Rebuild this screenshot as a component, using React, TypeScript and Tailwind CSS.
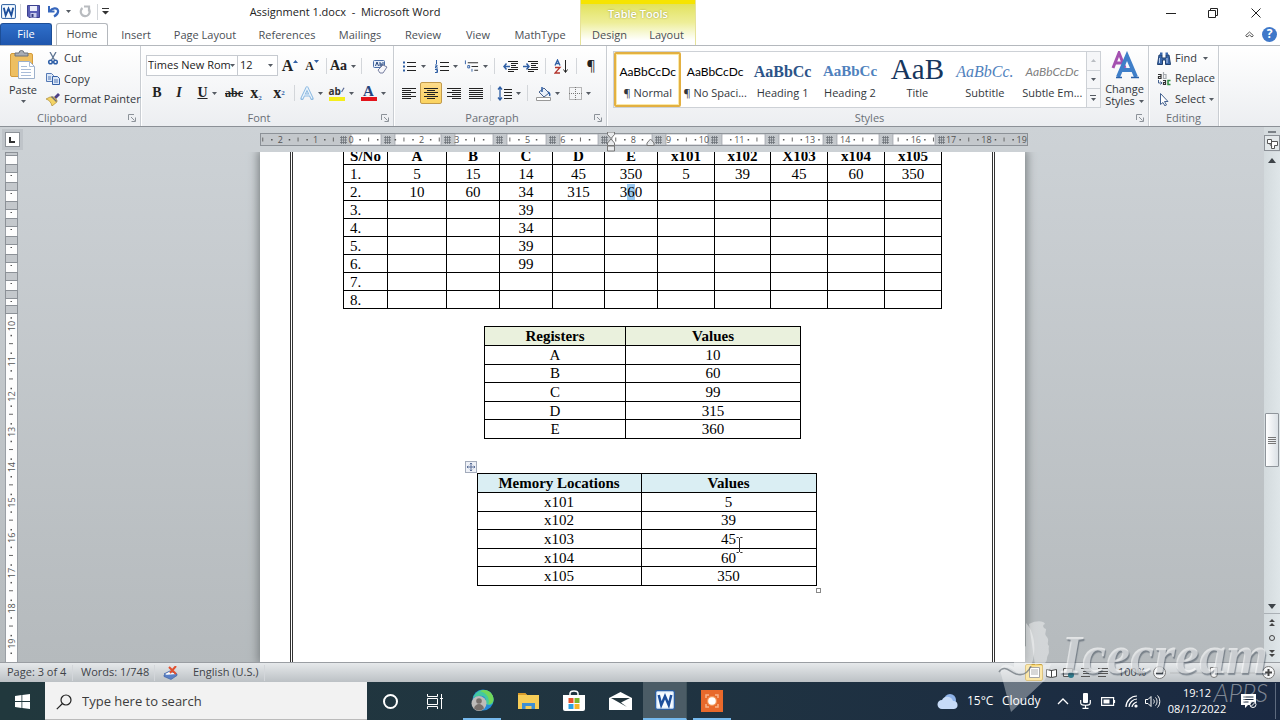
import React from "react";
import type { ReactNode } from "react";

const Caret = ({ className = "" }: { className?: string }) => (
  <svg width="5" height="3" viewBox="0 0 5 3" className={`shrink-0 ${className}`} aria-hidden="true">
    <path d="M0 0h5L2.500 3z" fill="#555b63" />
  </svg>
);

const Sep = ({ className = "" }: { className?: string }) => <span className={`h-4 w-px shrink-0 bg-[#d3d6da] ${className}`} />;

function Tool({ label, className, children, caret }: { label: string; className: string; children: ReactNode; caret?: boolean }) {
  return (
    <button aria-label={label} className={`flex h-5 shrink-0 items-center justify-center gap-1 ${className}`}>
      {children}
      {caret && <Caret />}
    </button>
  );
}

function Group({ title, className, launcher, children }: { title: string; className: string; launcher?: boolean; children: ReactNode }) {
  return (
    <section aria-label={title} className={`flex flex-col border-r border-[#c9cdd2] shadow-[1px_0_0_#fff] ${className}`}>
      <div className="min-h-0 grow">{children}</div>
      <div className={`relative flex h-4 shrink-0 items-center justify-center text-[#6a6f76] ${launcher ? "pr-4" : ""}`}>
        {title}
        {launcher && (
          <button aria-label={`${title} settings`} className="absolute right-1 top-1">
            <svg width="8" height="8" viewBox="0 0 8 8" fill="none" stroke="#8c9299">
              <path d="M.5 6V.5H6M3 3l3.500 3.500M7.500 3.500v4h-4" />
            </svg>
          </button>
        )}
      </div>
    </section>
  );
}

function WordLogo({ size }: { size: number }) {
  return (
    <svg width={size} height={size} viewBox="0 0 16 16" className="shrink-0" aria-hidden="true">
      <rect x=".5" y=".5" width="15" height="15" rx="1.500" fill="#dcebfa" stroke="#2c5d9f" />
      <rect x="2" y="2" width="12" height="12" fill="#f7fbff" />
      <path d="M3 4l2 8 3-7 3 7 2-8" fill="none" stroke="#1d4f9c" strokeWidth="2" />
    </svg>
  );
}

function LinesIcon({ rows, width = 14 }: { rows: number[][]; width?: number }) {
  return (
    <svg width={width} height="13" viewBox={`0 0 ${width} 13`} stroke="#222" aria-hidden="true">
      {rows.map(([a, b], i) => (
        <path key={i} d={`M${a} ${i * 2 + 1.5}H${b}`} />
      ))}
    </svg>
  );
}

const leftRows = [[0, 14], [0, 9], [0, 14], [0, 9], [0, 14], [0, 9]];
const centerRows = [[0, 14], [3, 11], [0, 14], [3, 11], [0, 14], [3, 11]];
const rightRows = [[0, 14], [5, 14], [0, 14], [5, 14], [0, 14], [5, 14]];
const fullRows = [[0, 14], [0, 14], [0, 14], [0, 14], [0, 14], [0, 14]];

function IndentIcon({ out }: { out?: boolean }) {
  return (
    <svg width="16" height="13" viewBox="0 0 16 13" fill="none" stroke="#222" aria-hidden="true">
      <path d="M5 1.500h10M8 3.500h7M8 5.500h5M8 7.500h7M5 9.500h10M5 11.500h6" />
      <path d={out ? "M7 6.500H1M3.500 3.500L1 6.500l2.500 3" : "M0 6.500h6M3.500 3.500L6 6.500l-2.500 3"} stroke="#2f5fa5" strokeWidth="1.500" />
    </svg>
  );
}

function Header() {
  const tabs: [string, string][] = [
    ["Insert", "w-14"],
    ["Page Layout", "w-[82px]"],
    ["References", "w-[82px]"],
    ["Mailings", "w-16"],
    ["Review", "w-[62px]"],
    ["View", "w-12"],
    ["MathType", "w-[76px]"],
  ];
  return (
    <header className="flex h-[46px] shrink-0 border-b border-[#b4b8bd] bg-white">
      <div className="flex w-[580px] shrink-0 flex-col">
        <div className="flex h-6 items-center">
          <div className="flex w-[110px] items-center pl-px">
            <WordLogo size={15} />
            <Sep className="ml-1" />
            <button aria-label="Save" className="ml-1.5">
              <svg width="13" height="13" viewBox="0 0 13 13">
                <path d="M.5.5h12v12H2L.5 11z" fill="#5a5fb5" stroke="#3c418f" />
                <path d="M3 1h7v5H3z" fill="#eef0fb" />
                <path d="M3.500 8h6v4.500h-6z" fill="#c9cdec" />
                <path d="M4.500 9h2v3h-2z" fill="#333a80" />
              </svg>
            </button>
            <button aria-label="Undo" className="ml-2">
              <svg width="12" height="13" viewBox="0 0 12 13" fill="none">
                <path d="M1 1v5.500h5.500" stroke="#3767bd" strokeWidth="2" />
                <path d="M2 6c2-3 7-4 8-.5.6 2.500-1.500 4.500-4 6" stroke="#3767bd" strokeWidth="2.200" />
              </svg>
            </button>
            <Caret className="ml-1.5" />
            <button aria-label="Redo" className="ml-2">
              <svg width="12" height="13" viewBox="0 0 12 13" fill="none" stroke="#b9bcc0" strokeWidth="2.200">
                <path d="M9.500 3.500a4.500 4.500 0 1 1-6-.5M5 1.500h5v5" />
              </svg>
            </button>
            <Sep className="ml-1.5" />
            <button aria-label="Customize Quick Access Toolbar" className="ml-1">
              <svg width="7" height="7" viewBox="0 0 7 7">
                <path d="M0 0h7v1H0zM0 3h7L3.500 6.500z" fill="#333" />
              </svg>
            </button>
          </div>
          <h1 className="flex-1 pt-0.5 text-center text-[11px] text-[#222]">Assignment 1.docx&nbsp; -&nbsp; Microsoft Word</h1>
        </div>
        <nav className="flex h-[22px] text-[#4b4f55]">
          <button className="mr-1 w-[52px] rounded-t-[3px] border border-b-0 border-[#1d4e96] bg-linear-to-b from-[#2f6fca] to-[#1f56ad] text-white">File</button>
          <button className="relative z-10 w-[52px] rounded-t-[3px] border border-b-0 border-[#b4b8bd] bg-white">Home</button>
          {tabs.map(([name, w]) => (
            <button key={name} className={`shrink-0 pt-0.5 ${w}`}>{name}</button>
          ))}
        </nav>
      </div>
      <div className="flex w-[116px] shrink-0 flex-col border-x border-[#e6e29a] bg-linear-to-b from-[#e0e048] via-[#eeee98] via-50% to-white to-90%">
        <div className="flex h-6 items-center justify-center border-t-4 border-[#f6e400] font-semibold text-white [text-shadow:0_0_2px_#96963c]">Table Tools</div>
        <nav className="flex h-[22px] text-[#4b4f55]">
          <button className="flex-1 pt-0.5">Design</button>
          <button className="flex-1 pt-0.5">Layout</button>
        </nav>
      </div>
      <div className="flex grow flex-col items-end">
        <div className="flex h-[26px] items-center pr-0.5">
          <button aria-label="Minimize" className="flex w-[43px] justify-center"><svg width="10" height="10"><path d="M0 5.500h10" stroke="#222" /></svg></button>
          <button aria-label="Restore" className="flex w-[42px] justify-center">
            <svg width="10" height="10" fill="none" stroke="#222"><path d="M.5 2.500h7v7h-7zM2.500 2V.5h7v7H8" /></svg>
          </button>
          <button aria-label="Close" className="flex w-[44px] justify-center"><svg width="10" height="10" stroke="#222"><path d="M.5.5l9 9M9.500.5l-9 9" /></svg></button>
        </div>
        <div className="flex h-4 items-center gap-2 pr-[3px]">
          <button aria-label="Minimize the Ribbon">
            <svg width="9" height="7" viewBox="0 0 9 7" fill="#fff" stroke="#555"><path d="M.7 4.500L4.500 1l3.800 3.500-1.300 1.500-2.500-2-2.500 2z" /></svg>
          </button>
          <button aria-label="Help" className="flex size-[15px] items-center justify-center rounded-full bg-[#3f78c9] text-xs font-bold text-white">?</button>
        </div>
      </div>
    </header>
  );
}

function Clipboard() {
  return (
    <Group title="Clipboard" launcher className="w-[141px]">
      <div className="flex h-full pt-0.5">
        <button className="flex w-[46px] shrink-0 flex-col items-center pt-0.5">
          <svg width="26" height="29" viewBox="0 0 26 29">
            <rect x=".5" y="3.500" width="22" height="23" rx="1.500" fill="#eebf62" stroke="#d49b3b" />
            <path d="M5 6V3h4a2.500 2.500 0 0 1 5 0h4v3z" fill="#a8adb5" stroke="#6d737c" />
            <path d="M8.500 11.500h11l5 5v12h-16z" fill="#fff" stroke="#9db0cb" />
            <path d="M19.500 11.500v5h5M11 16.500h6M11 19.500h10M11 22.500h10M11 25.500h10" fill="none" stroke="#a9bcd8" />
          </svg>
          <span className="mt-[3px] leading-4 text-[#33373c]">Paste</span>
          <Caret className="mt-0.5" />
        </button>
        <div className="flex flex-col text-[#33373c]">
          <button className="flex h-[21px] items-center gap-1">
            <svg width="14" height="13" viewBox="-2 0 14 13" fill="none">
              <path d="M2 0l4.500 8M8 0L3.500 8" stroke="#5e7492" strokeWidth="1.300" />
              <circle cx="2.500" cy="10" r="1.800" stroke="#2d5ea8" strokeWidth="1.500" />
              <circle cx="7.500" cy="10" r="1.800" stroke="#2d5ea8" strokeWidth="1.500" />
            </svg>
            Cut
          </button>
          <button className="flex h-5 items-center gap-1">
            <svg width="14" height="12" viewBox="0 0 14 12">
              <path d="M.5.5h5l2 2v6h-7z" fill="#dce8f8" stroke="#5579b5" />
              <path d="M6.500 3.500h5l2 2v6h-7z" fill="#dce8f8" stroke="#345fa5" />
              <path d="M2 4h3M2 6h3M8 7h4M8 9h4" stroke="#5579b5" />
            </svg>
            Copy
          </button>
          <button className="flex h-5 items-center gap-1 whitespace-nowrap">
            <svg width="14" height="13" viewBox="0 0 14 13" className="shrink-0">
              <path d="M8 4l4-4 2 2-4 4z" fill="#4b3f86" />
              <path d="M4 4h4l3 3v2l-5 4C5 9 3 7 0 6z" fill="#f3d365" stroke="#a58128" strokeWidth=".6" />
              <path d="M6 3l5 5-1 1-5-5z" fill="#6f6f78" />
            </svg>
            Format Painter
          </button>
        </div>
      </div>
    </Group>
  );
}

function FontGroup() {
  const serif = "font-['Liberation_Serif',serif] font-bold text-[#222]";
  return (
    <Group title="Font" launcher className="w-[253px]">
      <div className="flex h-[30px] items-end pl-[5px]">
        <label className="relative flex h-[21px] w-[92px] items-center border border-[#c6cad0] bg-white">
          <select aria-label="Font" className="w-full appearance-none bg-transparent pl-px text-[#222]"><option>Times New Rom</option></select>
          <Caret className="pointer-events-none absolute right-0.5" />
        </label>
        <label className="relative flex h-[21px] w-10 items-center border border-l-0 border-[#c6cad0] bg-white">
          <select aria-label="Font Size" className="w-full appearance-none bg-transparent pl-0.5 text-[#222]"><option>12</option></select>
          <Caret className="pointer-events-none absolute right-1" />
        </label>
        <Tool label="Grow Font" className={`w-6 ${serif} text-base`}>
          <span className="flex items-start">A<svg width="5" height="3" className="mt-1.5"><path d="M0 3h5L2.500 0z" fill="#2f5fa5" /></svg></span>
        </Tool>
        <Tool label="Shrink Font" className={`w-5 ${serif} text-xs`}>
          <span className="flex items-start">A<svg width="5" height="3" className="mt-0.5"><path d="M0 0h5L2.500 3z" fill="#2f5fa5" /></svg></span>
        </Tool>
        <Sep className="mx-1 mb-0.5" />
        <Tool label="Change Case" caret className={`w-6 ${serif} text-sm`}>Aa</Tool>
        <Sep className="mx-1.5 mb-0.5" />
        <Tool label="Clear Formatting" className="w-6">
          <svg width="15" height="15" viewBox="0 0 15 15">
            <rect x=".5" y="1.500" width="11" height="7" rx="1" fill="#e8f0fb" stroke="#4a6ea8" />
            <path d="M2.500 7l1.500-4 1.500 4M7 3v4h2V5H7M10 3v4" fill="none" stroke="#26467d" />
            <path d="M5 11l5-5 4 2-4 6H7z" fill="#f7f7fb" stroke="#777fa0" />
          </svg>
        </Tool>
      </div>
      <div className="flex h-[34px] items-center pl-[5px]">
        <Tool label="Bold" className={`w-[22px] ${serif} text-sm`}>B</Tool>
        <Tool label="Italic" className={`w-[22px] ${serif} text-sm italic`}>I</Tool>
        <Tool label="Underline" caret className={`w-[34px] ${serif} text-sm underline`}>U</Tool>
        <Tool label="Strikethrough" className={`w-5 ${serif} text-xs line-through`}>abc</Tool>
        <Tool label="Subscript" className={`w-6 ${serif} text-base`}><span>x<sub className="text-[7px] text-[#2f5fa5]">2</sub></span></Tool>
        <Tool label="Superscript" className={`w-[22px] ${serif} text-base`}><span>x<sup className="text-[7px] text-[#2f5fa5]">2</sup></span></Tool>
        <Sep className="mx-1" />
        <Tool label="Text Effects" caret className="w-6">
          <svg width="14" height="14" viewBox="0 0 14 14"><path d="M2 12.500L7 2l5 10.500M4 9h6" fill="none" stroke="#8fbbe2" strokeWidth="3.200" strokeLinejoin="round" strokeLinecap="round" /><path d="M2 12.500L7 2l5 10.500M4 9h6" fill="none" stroke="#edf6fd" strokeWidth="1.200" /></svg>
        </Tool>
        <Tool label="Text Highlight Color" caret className="ml-1 w-7">
          <span className="flex h-[15px] w-4 flex-col border-b-4 border-[#f5ee1c] text-[10px] font-bold leading-[11px] text-[#333]"><span className="flex">ab<svg width="6" height="9" viewBox="0 0 6 9"><path d="M5 0L1 7" stroke="#5d6b94" strokeWidth="2" /></svg></span></span>
        </Tool>
        <Tool label="Font Color" caret className="ml-1 w-7">
          <span className={`flex h-[15px] w-4 justify-center border-b-4 border-[#e3131b] text-[15px] leading-[11px] ${serif}`}><span className="text-[#24457e]">A</span></span>
        </Tool>
      </div>
    </Group>
  );
}

function Paragraph() {
  return (
    <Group title="Paragraph" launcher className="w-[213px]">
      <div className="flex h-[30px] items-end pl-1.5">
        <Tool label="Bullets" caret className="w-7">
          <svg width="14" height="13" viewBox="0 0 14 13"><path d="M4 2.500h9M4 6.500h9M4 10.500h9" stroke="#222" /><path d="M0 1.500h2v2H0zM0 5.500h2v2H0zM0 9.500h2v2H0z" fill="#2f5fa5" /></svg>
        </Tool>
        <Tool label="Numbering" caret className="ml-1 w-7">
          <svg width="14" height="13" viewBox="0 0 14 13"><path d="M5 2.500h9M5 6.500h9M5 10.500h9" stroke="#222" /><path d="M1.500 0v4M0 5h2v1.500H.5V8H3M0 9.500h2.500v3H0M1 11h1" stroke="#2f5fa5" fill="none" /></svg>
        </Tool>
        <Tool label="Multilevel List" caret className="ml-1 w-6">
          <svg width="16" height="13" viewBox="0 0 16 13"><path d="M4 2.500h11M8 6.500h7M11 10.500h4" stroke="#222" /><path d="M1.500 0v4M4 5.500h2v2.500H4zM8.500 9v3" stroke="#2f5fa5" fill="none" /></svg>
        </Tool>
        <Sep className="mx-1.5 mb-0.5" />
        <Tool label="Decrease Indent" className="w-5"><IndentIcon out /></Tool>
        <Tool label="Increase Indent" className="w-5"><IndentIcon /></Tool>
        <Sep className="mx-1 mb-0.5" />
        <Tool label="Sort" className="w-[22px]">
          <svg width="15" height="15" viewBox="0 0 15 15" fill="none"><path d="M1 6.500L3.500 1 6 6.500M2 4.500h3" stroke="#2f5fa5" strokeWidth="1.300" /><path d="M1 8.500h5L1 14h5" stroke="#b3342d" strokeWidth="1.300" /><path d="M11.500 1v12M9.500 10.500l2 3 2-3" stroke="#222" /></svg>
        </Tool>
        <Sep className="mx-1 mb-0.5" />
        <Tool label="Show paragraph marks" className="w-5 text-sm text-[#222]">¶</Tool>
      </div>
      <div className="flex h-[34px] items-center pl-1">
        <Tool label="Align Left" className="w-[22px]"><LinesIcon rows={leftRows} /></Tool>
        <button aria-label="Center" className="flex h-[22px] w-[22px] items-center justify-center rounded-[2px] border border-[#c29b4c] bg-linear-to-b from-[#fddb8a] to-[#fbd35f]"><LinesIcon rows={centerRows} /></button>
        <Tool label="Align Right" className="w-6"><LinesIcon rows={rightRows} /></Tool>
        <Tool label="Justify" className="w-5"><LinesIcon rows={fullRows} /></Tool>
        <Sep className="mx-1" />
        <Tool label="Line Spacing" caret className="ml-0.5 w-6">
          <svg width="15" height="15" viewBox="0 0 15 15"><path d="M7 3.500h8M7 6.500h8M7 9.500h8M7 12.500h8" stroke="#222" /><path d="M3 1v13M1 3.500l2-2.500 2 2.500M1 11.500L3 14l2-2.500" stroke="#2f5fa5" fill="none" strokeWidth="1.300" /></svg>
        </Tool>
        <Sep className="mx-1.5" />
        <Tool label="Shading" caret className="w-7">
          <svg width="15" height="15" viewBox="0 0 15 15"><path d="M3 6l5-4 5 5-5 4z" fill="#e9f0fa" stroke="#46608c" /><path d="M6 1v5M12 6c2 1 2 3 1.500 4" stroke="#2f5fa5" strokeWidth="1.500" fill="none" /><path d="M.5 11.500h14v3H.5z" fill="#fff" stroke="#999" /></svg>
        </Tool>
        <Tool label="Borders" caret className="ml-1 w-7">
          <svg width="13" height="13" viewBox="0 0 13 13" fill="none" stroke="#777"><path d="M.5.5h12v12H.5zM6.500 0v13M0 6.500h13" strokeDasharray="1 1" /></svg>
        </Tool>
      </div>
    </Group>
  );
}

function Styles() {
  const styles: [string, string, string][] = [
    ["AaBbCcDc", "¶ Normal", "font-['Lato',sans-serif] text-xs text-black"],
    ["AaBbCcDc", "¶ No Spaci...", "font-['Lato',sans-serif] text-xs text-black"],
    ["AaBbCc", "Heading 1", "font-['Liberation_Serif',serif] text-base font-bold text-[#2c5488]"],
    ["AaBbCc", "Heading 2", "font-['Liberation_Serif',serif] text-[15px] font-bold text-[#4f81bd]"],
    ["AaB", "Title", "font-['Liberation_Serif',serif] text-[29px] text-[#17365d]"],
    ["AaBbCc.", "Subtitle", "font-['Liberation_Serif',serif] text-base italic text-[#4f81bd]"],
    ["AaBbCcDc", "Subtle Em...", "font-['Lato',sans-serif] text-xs italic text-[#808080]"],
  ];
  return (
    <Group title="Styles" launcher className="w-[542px]">
      <div className="flex pl-1.5 pt-[5px]">
        <div className="flex h-[57px] w-[488px] border border-[#cdd1d6] bg-white">
          {styles.map(([sample, name, cls], i) => (
            <button key={name} className={`flex min-w-0 flex-1 flex-col items-center text-[#33373c] ${i === 0 ? "rounded-[2px] border-2 border-[#e3b041] shadow-[inset_0_0_0_1px_#fbe9a8]" : "border-2 border-transparent"}`}>
              <span className={`flex h-[31px] items-center justify-center leading-none whitespace-nowrap ${i === 4 ? "" : "pt-1"} ${cls}`}>{sample}</span>
              <span className="whitespace-nowrap leading-4">{name}</span>
            </button>
          ))}
          <div className="flex w-[14px] shrink-0 flex-col divide-y divide-[#cdd1d6] border-l border-[#cdd1d6] bg-[#f5f6f8]">
            <button aria-label="Scroll styles up" className="flex flex-1 items-center justify-center"><svg width="5" height="3"><path d="M0 3h5L2.500 0z" fill="#b9bdc2" /></svg></button>
            <button aria-label="Scroll styles down" className="flex flex-1 items-center justify-center"><Caret /></button>
            <button aria-label="More styles" className="flex flex-1 flex-col items-center justify-center gap-0.5"><span className="h-px w-[6px] bg-[#555b63]" /><Caret /></button>
          </div>
        </div>
        <button className="flex grow flex-col items-center leading-3 text-[#33373c]">
          <svg width="28" height="28" viewBox="0 0 28 28" fill="none">
            <path d="M2 17L8 2l6 15M4.500 12h7" stroke="#a451b0" strokeWidth="3" />
            <path d="M7 26l9-21 9 21M11 19h10" stroke="#3f7fc9" strokeWidth="4" />
            <path d="M5 26.500h6M20 26.500h8" stroke="#2a62ab" strokeWidth="1.500" />
          </svg>
          <span className="mt-1">Change</span>
          <span className="flex items-center gap-1">Styles <Caret /></span>
        </button>
      </div>
    </Group>
  );
}

function Editing() {
  return (
    <Group title="Editing" className="w-[70px]">
      <div className="flex flex-col pl-2 pt-0.5 text-[#33373c]">
        <button className="flex h-5 items-center gap-1">
          <svg width="14" height="13" viewBox="0 0 14 13"><path d="M2 3h3v3h4V3h3l1.500 9.500h-5V8h-3v4.500h-5z" fill="#3a67ab" stroke="#21406f" /><path d="M3 .5h2.500V3H3zM8.500.5H11V3H8.500z" fill="#3a67ab" /><path d="M2.500 6v5M10 6v5" stroke="#b7cdec" /></svg>
          Find <Caret className="ml-0.5" />
        </button>
        <button className="flex h-[21px] items-center gap-1">
          <svg width="14" height="14" viewBox="0 0 14 14" fill="none" aria-hidden="true">
            <path d="M1 2.500h3v4H1.500v-2H4" stroke="#333" strokeWidth="1.200" />
            <path d="M6.500 0v6.500h2.500v-4H6.500" stroke="#a5a9ae" strokeWidth="1.200" />
            <path d="M1.500 8v3h3M3.500 9.500L5 11l-1.500 1.500" stroke="#44618f" />
            <path d="M6 8.500h2.500v4H6.500v-2h2" stroke="#333" strokeWidth="1.200" />
            <path d="M13.500 8.500H11v4h2.500" stroke="#2b8a3e" strokeWidth="1.500" />
          </svg>
          Replace
        </button>
        <button className="flex h-5 items-center gap-1">
          <svg width="14" height="13" viewBox="0 0 14 13"><path d="M3.500.5v11l2.500-2 2 3.500 1.500-1-2-3.500H11z" fill="#fff" stroke="#44618f" /></svg>
          Select <Caret />
        </button>
      </div>
    </Group>
  );
}

const markers = [343, 387, 447, 499, 552, 604, 658, 714, 771, 829, 885, 941];

function HorizontalRuler() {
  const marks: ReactNode[] = [];
  for (let q = -10; q <= 76; q++) {
    const x = 91 + q * 8.825;
    const abs = x + 260;
    if (abs > 1026 || abs < 262) continue;
    if (markers.some((m) => abs > m - 7 && abs < m + 8)) continue;
    const n = Math.abs(q / 4);
    if (q % 4 === 0) marks.push(<text key={q} x={x} y="10" textAnchor="middle">{n}</text>);
    else if (q % 2 === 0) marks.push(<path key={q} d={`M${x} 4.500v4`} stroke="#666" />);
    else marks.push(<rect key={q} x={x - 0.5} y="6" width="1.500" height="1.500" />);
  }
  return (
    <svg width="768" height="21" viewBox="0 -1 768 21" className="text-[9px]" fill="#555" role="img" aria-label="Horizontal ruler">
      <rect x=".5" y=".5" width="767" height="12" fill="#c4c8cc" stroke="#8c9197" />
      {markers.slice(0, -1).map((m, i) => (
        <rect key={m} x={m - 252} y="1" width={markers[i + 1] - m - 14} height="11" fill="#fff" stroke="#9a9fa5" strokeWidth=".7" />
      ))}
      {markers.map((m) => (
        <path key={m} d={`M${m - 263} 4.500h7m-7 2.500h7m-7 2.500h7M${m - 261.500} 3v8m2-8v8m2-8v8`} stroke="#6d7278" strokeWidth=".8" />
      ))}
      {marks}
      <path d="M347.500 -1h7v2.500l-3.500 4-3.500-4zM347.500 12.500V10l3.500-4 3.500 4v2.500zM347.500 13h7v5h-7zM387 12.500V10l3.500-4 3.500 4v2.500z" fill="#e8eaec" stroke="#777" />
    </svg>
  );
}

function VerticalRuler() {
  const greys = [152, 164, 182, 201, 218, 236, 254, 272, 290, 305];
  const marks: ReactNode[] = [];
  for (let q = 39; q <= 78; q++) {
    const y = 174 + (q - 40) * 8.825;
    if (y > 508) break;
    if (q % 4 === 0)
      marks.push(<text key={q} x="0" y="0" transform={`translate(9.500 ${y}) rotate(-90)`} textAnchor="middle">{q / 4}</text>);
    else if (q % 2 === 0) marks.push(<path key={q} d={`M4 ${y}h4`} stroke="#666" />);
    else marks.push(<rect key={q} x="5.500" y={y} width="1.500" height="1.500" />);
  }
  return (
    <svg width="13" height="510" viewBox="0 0 13 510" className="text-[9px]" fill="#555" role="img" aria-label="Vertical ruler">
      <rect x=".5" y="-1" width="12" height="520" fill="#fdfdfd" stroke="#9a9fa5" />
      {greys.map((g) => (
        <React.Fragment key={g}>
          <rect x=".5" y={g - 151.5} width="12" height={g === 152 ? 3 : 8} fill="#c4c8cc" stroke="#8c9197" />
          {g > 152 && g < 300 && <rect x="5.500" y={g - 141} width="1.500" height="1" />}
        </React.Fragment>
      ))}
      {marks}
    </svg>
  );
}

const columns = [
  ["S/No", "w-[44px]"], ["A", "w-[59px]"], ["B", "w-[53px]"], ["C", "w-[53px]"], ["D", "w-[52px]"], ["E", "w-[53px]"],
  ["x101", "w-[57px]"], ["x102", "w-[56px]"], ["X103", "w-[57px]"], ["x104", "w-[57px]"], ["x105", "w-[57px]"],
];
const traceRows = [
  ["5", "15", "14", "45", "350", "5", "39", "45", "60", "350"],
  ["10", "60", "34", "315", "360", "", "", "", "", ""],
  ["", "", "39"], ["", "", "34"], ["", "", "39"], ["", "", "99"], [], [],
];

function PairTable({ head, rows, tint, cols, className }: { head: string[]; rows: string[][]; tint: string; cols: string[]; className: string }) {
  return (
    <table className={`table-fixed border-collapse text-center leading-4 ${className}`}>
      <thead>
        <tr className={tint}>
          {head.map((h, i) => <th key={h} className={`h-[19px] border border-black p-0 ${cols[i]}`}>{h}</th>)}
        </tr>
      </thead>
      <tbody>
        {rows.map((r) => (
          <tr key={r[0]}>{r.map((c, i) => <td key={i} className="border border-black p-0">{c}</td>)}</tr>
        ))}
      </tbody>
    </table>
  );
}

function Page() {
  return (
    <main className="mx-auto h-full w-[765px] shrink-0 overflow-hidden bg-white px-[30px] font-['Liberation_Serif',serif] text-[15px] text-black shadow-[0_0_9px_2px_#7b8083]">
      <div className="flex h-full flex-col items-center border-x-3 border-double border-[#333]">
        <table className="-mt-1.5 w-[599px] table-fixed border-collapse text-center leading-4">
          <thead>
            <tr>{columns.map(([c, w]) => <th key={c} className={`h-[18px] border border-black p-0 ${w}`}>{c}</th>)}</tr>
          </thead>
          <tbody>
            {traceRows.map((row, r) => (
              <tr key={r}>
                <td className="h-[18px] border border-black p-0 pl-1.5 text-left">{r + 1}.</td>
                {columns.slice(1).map(([c], i) => (
                  <td key={c} className="border border-black p-0">
                    {row[i] === "360" ? <>3<span className="bg-[#9ccaf0]">6</span>0</> : row[i]}
                  </td>
                ))}
              </tr>
            ))}
          </tbody>
        </table>
        <PairTable
          className="mt-[17px] h-[113px] w-[316px]"
          tint="bg-[#eaf1dd]"
          cols={["w-[141px]", "w-[175px]"]}
          head={["Registers", "Values"]}
          rows={[["A", "10"], ["B", "60"], ["C", "99"], ["D", "315"], ["E", "360"]]}
        />
        <div className="relative ml-2 mt-[34px]">
          <PairTable
            className="h-[113px] w-[339px]"
            tint="bg-[#daeef3]"
            cols={["w-[164px]", "w-[175px]"]}
            head={["Memory Locations", "Values"]}
            rows={[["x101", "5"], ["x102", "39"], ["x103", "45"], ["x104", "60"], ["x105", "350"]]}
          />
          <svg className="absolute -left-3 -top-3" width="12" height="12" viewBox="0 0 12 12" fill="none" stroke="#5b6f99">
            <rect x=".5" y=".5" width="11" height="11" fill="#eef1f7" stroke="#a3abbb" />
            <path d="M6 2v8M2 6h8M4.800 3.200L6 2l1.200 1.200M4.800 8.800L6 10l1.200-1.200M3.200 4.800L2 6l1.200 1.200M8.800 4.800L10 6 8.800 7.200" />
          </svg>
          <span className="absolute -bottom-[7px] -right-1 size-[5px] border border-[#888] bg-white" />
          <svg className="absolute left-[259px] top-[64px]" width="7" height="16" viewBox="0 0 7 16" fill="none" stroke="#333">
            <path d="M.5.5h2l1 1 1-1h2M.5 15.500h2l1-1 1 1h2M3.500 1v14" />
          </svg>
        </div>
      </div>
    </main>
  );
}

function ScrollBar() {
  return (
    <div className="flex h-full w-4 shrink-0 flex-col items-center bg-linear-to-r from-[#d3dadd] to-[#dfe6e9]">
      <button aria-label="Scroll up" className="flex h-4 items-center"><svg width="8" height="5"><path d="M0 5h8L4 0z" fill="#3d4348" /></svg></button>
      <div className="flex w-full grow flex-col items-center justify-end pb-[132px]">
        <div className="flex h-[54px] w-[14px] flex-col items-center justify-center gap-px rounded-[1px] border border-[#8f959b] bg-linear-to-r from-white to-[#dbe1e6]">
          <span className="h-px w-2 bg-[#777]" /><span className="h-px w-2 bg-[#777]" /><span className="h-px w-2 bg-[#777]" /><span className="h-px w-2 bg-[#777]" />
        </div>
      </div>
      <button aria-label="Scroll down" className="flex h-[14px] items-center"><svg width="8" height="5"><path d="M0 0h8L4 5z" fill="#3d4348" /></svg></button>
      <div className="flex h-[49px] w-full flex-col items-center justify-around border-t border-[#aab0b5]">
        <button aria-label="Previous page"><svg width="6" height="7"><path d="M0 3h6L3 0zM0 7h6L3 4z" fill="#444" /></svg></button>
        <button aria-label="Browse object" className="size-[6px] rounded-full border border-[#444]" />
        <button aria-label="Next page"><svg width="6" height="7"><path d="M0 0h6L3 3zM0 4h6L3 7z" fill="#444" /></svg></button>
      </div>
    </div>
  );
}

function StatusBar() {
  return (
    <footer className="flex h-5 shrink-0 items-center border-t border-[#9a9ea3] bg-linear-to-b from-[#e6e9eb] to-[#bcc1c5] text-[#3f4348]">
      <button className="w-[72px] shrink-0 pl-[7px] text-left">Page: 3 of 4</button>
      <Sep className="bg-[#9fa4a9]" />
      <button className="w-[81px] shrink-0 pl-2 text-left">Words: 1/748</button>
      <Sep className="bg-[#9fa4a9]" />
      <button aria-label="Proofing errors" className="w-[38px] pl-2">
        <svg width="16" height="14" viewBox="0 0 16 14"><path d="M1 8l6-3 7 3-6 4z" fill="#fff" stroke="#456bb0" /><path d="M1 9v1.500l7 3 6-4V8" fill="#5a80c6" stroke="#345a9f" strokeWidth=".6" /><path d="M6 1l7 7M13 0L7 7" stroke="#e1502f" strokeWidth="2" /></svg>
      </button>
      <button className="w-[71px] shrink-0 text-left">English (U.S.)</button>
      <Sep className="bg-[#9fa4a9]" />
      <div className="ml-auto flex items-center pr-[5px]">
        <button aria-label="Print Layout" className="flex h-[17px] w-[18px] items-center justify-center rounded-[2px] border border-[#c9a23d] bg-[#fbdc7c]"><svg width="11" height="11"><path d="M.5.500h10v10H.5z" fill="#fff" stroke="#777" /><path d="M2 3h7M2 5h7M2 7h7" stroke="#888" /></svg></button>
        <button aria-label="Full Screen Reading" className="flex w-[17px] justify-center"><svg width="11" height="10" fill="#fff" stroke="#444"><path d="M.5 1.500l5 1 5-1v7l-5 1-5-1zM5.500 2v7" /></svg></button>
        <button aria-label="Web Layout" className="flex w-[17px] justify-center"><svg width="11" height="10"><path d="M.5.500h9v8h-9z" fill="#eee" stroke="#555" /><circle cx="8" cy="7" r="3" fill="#2d7a8c" /></svg></button>
        <button aria-label="Outline" className="flex w-[17px] justify-center"><svg width="10" height="9" stroke="#555"><path d="M0 .5h8M2 3.500h8M2 5.500h6M0 8.500h9" /></svg></button>
        <button aria-label="Draft" className="flex w-[17px] justify-center"><svg width="10" height="9" stroke="#555"><path d="M0 .5h10M0 3.500h10M0 5.500h10M0 8.500h8" /></svg></button>
        <button className="w-[42px] text-center">100%</button>
        <button aria-label="Zoom Out" className="flex size-[13px] items-center justify-center rounded-full border border-[#777] bg-[#f6f7f8]"><span className="h-0.5 w-[7px] bg-[#444]" /></button>
        <input aria-label="Zoom" type="range" defaultValue={50} className="mx-1 h-3 w-[88px] appearance-none bg-linear-to-b from-transparent from-45% via-[#888] via-50% to-transparent to-55% [&::-webkit-slider-thumb]:h-[11px] [&::-webkit-slider-thumb]:w-[8px] [&::-webkit-slider-thumb]:appearance-none [&::-webkit-slider-thumb]:rounded-b-full [&::-webkit-slider-thumb]:border [&::-webkit-slider-thumb]:border-[#777] [&::-webkit-slider-thumb]:bg-[#f4f4f4]" />
        <button aria-label="Zoom In" className="flex size-[13px] items-center justify-center rounded-full border border-[#777] bg-[#f6f7f8]"><svg width="7" height="7" stroke="#444" strokeWidth="2"><path d="M0 3.500h7M3.500 0v7" /></svg></button>
      </div>
    </footer>
  );
}

function TaskBar() {
  return (
    <div className="flex h-[38px] shrink-0 items-stretch bg-linear-to-r from-[#21383d] via-[#203441] via-50% to-[#1a2942] text-white">
      <button aria-label="Start" className="flex w-[45px] shrink-0 items-center justify-center">
        <svg width="15" height="15" viewBox="0 0 15 15" fill="#fff"><path d="M0 2l6.500-.9v6H0zM7.300 1L15 0v7.100H7.300zM0 7.900h6.500v6L0 13zM7.300 7.900H15V15l-7.700-1z" /></svg>
      </button>
      <label className="flex w-[322px] shrink-0 items-center gap-2.5 border-b border-[#bbb] bg-[#f2f2f2] pl-[11px] pt-0.5">
        <svg width="16" height="16" viewBox="0 0 16 16" fill="none" stroke="#222" strokeWidth="1.200"><circle cx="10" cy="6" r="5" /><path d="M6.500 9.500L.8 15.200" /></svg>
        <input aria-label="Search" placeholder="Type here to search" className="w-64 bg-transparent text-[13px] outline-none placeholder:text-[#3c3c3c]" />
      </label>
      <button aria-label="Cortana" className="flex w-[46px] items-center justify-center"><span className="size-[15px] rounded-full border-2 border-white" /></button>
      <button aria-label="Task View" className="flex w-[44px] items-center justify-center">
        <svg width="16" height="15" viewBox="0 0 16 15" fill="none" stroke="#fff"><path d="M.5 0v2.500h10V0M.5 4.500h10v6H.5zM.5 15v-2.500h10V15M14.500 0v15M13 4.500h3" /></svg>
      </button>
      <button aria-label="Microsoft Edge" className="ml-1.5 mr-1 flex w-[38px] items-center justify-center border-b-2 border-[#76b9ed] pt-0.5">
        <svg width="24" height="24" viewBox="0 0 24 24">
          <circle cx="13" cy="11" r="10.500" fill="#2389d7" />
          <path d="M3 9C6 1 14-1 20 3c4 4 4 8 3 11-2 3-7 2-8 0C18 8 12 4 3 9z" fill="#43c9a0" />
          <path d="M10 2c6-3 13 1 13.500 8 0 3-2 5-5 5C20 8 16 4 10 2z" fill="#72d75a" />
          <circle cx="9" cy="14.500" r="7.500" fill="#bdbbb9" />
          <circle cx="9" cy="12" r="2.800" fill="#77706c" /><path d="M4 19.500c1-6 9-6 10 0a7.500 7.500 0 0 1-10 0z" fill="#77706c" />
        </svg>
      </button>
      <button aria-label="File Explorer" className="flex w-[46px] items-center justify-center">
        <svg width="21" height="18" viewBox="0 0 21 18"><path d="M0 1h7l2 2h12v14H0z" fill="#f7cd57" /><path d="M0 1h7l2 2H0z" fill="#d99b2a" /><path d="M4 17v-6h13v6h-3.500v-3h-6v3z" fill="#3e8fd3" /></svg>
      </button>
      <button aria-label="Microsoft Store" className="flex w-[46px] items-center justify-center">
        <svg width="22" height="22" viewBox="0 0 22 22"><path d="M7 6V3.500C7 0 15 0 15 3.500V6" fill="none" stroke="#fff" strokeWidth="1.500" /><path d="M0 5h22v14a2 2 0 0 1-2 2H2a2 2 0 0 1-2-2z" fill="#fff" /><path d="M5.500 8h5v5h-5z" fill="#e6502b" /><path d="M11.500 8h5v5h-5z" fill="#7cb52b" /><path d="M5.500 14h5v5h-5z" fill="#2ba1e2" /><path d="M11.500 14h5v5h-5z" fill="#f6b526" /></svg>
      </button>
      <button aria-label="Mail" className="flex w-[46px] items-center justify-center">
        <svg width="23" height="18" viewBox="0 0 23 18"><path d="M0 6l11.500-6L23 6v12H0z" fill="#fff" /><path d="M2 6h19l-9 4.500 6 4.500L2 6z" fill="#22343c" /></svg>
      </button>
      <button aria-label="Microsoft Word" className="flex w-11 items-center justify-center border-b-2 border-r border-[#76b9ed] border-r-[#3e5159] bg-[#4b5c66]"><WordLogo size={20} /></button>
      <button aria-label="Screen recorder" className="ml-1.5 flex w-[38px] items-center justify-center border-b-2 border-[#76b9ed] pt-0.5">
        <svg width="22" height="22" viewBox="0 0 22 22"><path d="M0 0h22v22H0z" fill="#e8692b" /><path d="M5 8V5h3M14 5h3v3M17 14v3h-3M8 17H5v-3" fill="none" stroke="#f7b48a" strokeWidth="1.500" /><circle cx="11" cy="11" r="5" fill="#f39a5d" /><circle cx="11" cy="11" r="3.800" fill="#fff" /></svg>
      </button>
      <div className="ml-auto flex shrink-0 items-center text-xs">
        <button className="flex items-center text-left">
          <svg width="22" height="15" viewBox="0 0 22 15"><circle cx="13" cy="6" r="6" fill="#8fb3e8" /><path d="M5 15a4.500 4.500 0 0 1 0-9 6 6 0 0 1 11 1 4 4 0 0 1 1 8z" fill="#c7dbf7" /></svg>
          <span className="ml-2 w-[35px]">15°C</span><span className="w-[50px]">Cloudy</span>
        </button>
        <button aria-label="Show hidden icons" className="flex w-[22px] justify-center"><svg width="12" height="7" fill="none" stroke="#fff" strokeWidth="1.300"><path d="M1 6l5-5 5 5" /></svg></button>
        <button aria-label="Microphone" className="flex w-[22px] justify-center"><svg width="11" height="16" viewBox="0 0 11 16"><rect x="3" width="5" height="10" rx="1" fill="#fff" /><path d="M.7 7v3c0 3 9.600 3 9.600 0V7M5.500 12v3M2.500 15.300h6" fill="none" stroke="#fff" strokeWidth="1.200" /></svg></button>
        <button aria-label="Battery" className="flex w-6 justify-center"><svg width="15" height="9" viewBox="0 0 15 9"><path d="M.6.6h12v7.800H.6zM13.500 3v3" fill="none" stroke="#fff" strokeWidth="1.200" /><path d="M2.500 2.500h6v4h-6z" fill="#fff" /></svg></button>
        <button aria-label="Wi-Fi" className="flex w-[22px] justify-center"><svg width="13" height="13" viewBox="0 0 13 13" fill="none" stroke="#fff" strokeWidth="1.200"><path d="M1 12C1 6 6 1 12 1M4 12c0-4 4-8 8-8M7 12c0-2 3-5 5-5" /><circle cx="11" cy="11" r="1" fill="#fff" /></svg></button>
        <button aria-label="Volume" className="flex w-[22px] justify-center"><svg width="16" height="13" viewBox="0 0 16 13" fill="none" stroke="#fff"><path d="M.5 4.500h2.500l3-3v10l-3-3H.5zM8.500 4.500c1 1 1 3 0 4M10.500 2.500c2 2 2 6 0 8M12.500.5c3 3 3 9 0 12" /></svg></button>
        <button className="w-[66px] text-center text-[11px] leading-4">19:12<br />08/12/2022</button>
        <button aria-label="Notifications" className="flex w-[38px] justify-center"><svg width="16" height="16" viewBox="0 0 16 16"><path d="M0 1h15v9l-4 2H7l-3 3v-3H0z" fill="#fff" /><path d="M2.500 4h10M2.500 6.500h10M2.500 9h5" stroke="#1b2a40" /><circle cx="12" cy="11.500" r="3" fill="#1b2a40" stroke="#fff" /><path d="M10 13.500l4-4" stroke="#fff" /></svg></button>
        <span className="mr-1 ml-[7px] h-9 w-px bg-[#5d6a7e]" />
      </div>
    </div>
  );
}

function Watermark() {
  return (
    <div className="pointer-events-none absolute bottom-0 right-0 h-[100px] w-[286px]">
      <svg className="absolute left-0 top-0" width="60" height="100" viewBox="0 0 60 100" fill="#fff" fillOpacity=".4">
        <path d="M35 4c8-4 15-3 16 0-3 1-2 4 1 5 0 4-2 5 1 8 3 4-1 6 2 9-1 4 1 6-1 9-2 4 0 5-3 8l-10 2z" />
        <path d="M32 3C41 12 44 34 35 50c-2 5-8 7-13 2-5-4-10-6-13-3l-2 3c-3-8 7-9 13-5V34l12-8z" />
        <path d="M6 50c4-5 11 2 16 4 7 2 12-1 15-7l20-3-6 16-34 32z" fillOpacity=".35" />
        <path d="M5 52c5-8 11 0 17 2 7 2 12-1 15-8" fill="none" stroke="#687078" strokeOpacity=".7" strokeWidth="1.500" />
      </svg>
      <span className="absolute right-3 top-2 font-['Liberation_Serif',serif] text-[54px] font-bold italic leading-none text-white/60 [text-shadow:1px_2px_1px_#33405077]">Icecream</span>
      <span className="absolute right-3 top-[60px] font-['Lato',sans-serif] text-[25px] font-light italic leading-none text-white/45">APPS</span>
    </div>
  );
}

export default function App() {
  return (
    <div className="relative flex h-screen w-full flex-col overflow-hidden bg-[#c8cdd1] font-['Open_Sans','Noto_Sans',sans-serif] text-[11px]">
      <Header />
      <div className="flex h-[81px] shrink-0 border-b border-[#8c9197] bg-linear-to-b from-white to-[#eceef1]">
        <Clipboard />
        <FontGroup />
        <Paragraph />
        <Styles />
        <Editing />
      </div>
      <div className="flex min-h-0 grow flex-col bg-linear-to-b from-[#cdd2d6] to-[#b5babd]">
        <div className="flex h-[25px] shrink-0">
          <div className="flex w-[21px] shrink-0 items-center justify-center">
            <button aria-label="Tab selector" className="ml-[3px] flex size-[15px] items-center justify-center border border-[#8c9197] bg-white outline-3 outline-[#bfc4c9]"><svg width="6" height="6"><path d="M1 0v5h5" fill="none" stroke="#333" strokeWidth="2" /></svg></button>
          </div>
          <div className="flex min-w-0 grow justify-center pl-[3px] pt-[5px]"><HorizontalRuler /></div>
          <div className="flex w-4 shrink-0 flex-col items-center gap-0.5 bg-[#d5dbde] pt-1">
            <span className="h-0.5 w-2 shrink-0 bg-[#7b8187]" />
            <button aria-label="View Ruler" className="flex size-4 items-center justify-center border border-[#8c9197] bg-[#e3e8ea]"><svg width="11" height="11" fill="#fff" stroke="#555"><path d="M.5 1.500h4v4h-4zM4.500 3.500h6v4h-3v3h-3zM2 5l3 4" /></svg></button>
          </div>
        </div>
        <div className="flex min-h-0 grow">
          <div className="h-full w-[21px] shrink-0 overflow-hidden pl-[5px]"><VerticalRuler /></div>
          <div className="flex h-full min-w-0 grow overflow-hidden"><Page /></div>
          <ScrollBar />
        </div>
      </div>
      <StatusBar />
      <TaskBar />
      <Watermark />
    </div>
  );
}
